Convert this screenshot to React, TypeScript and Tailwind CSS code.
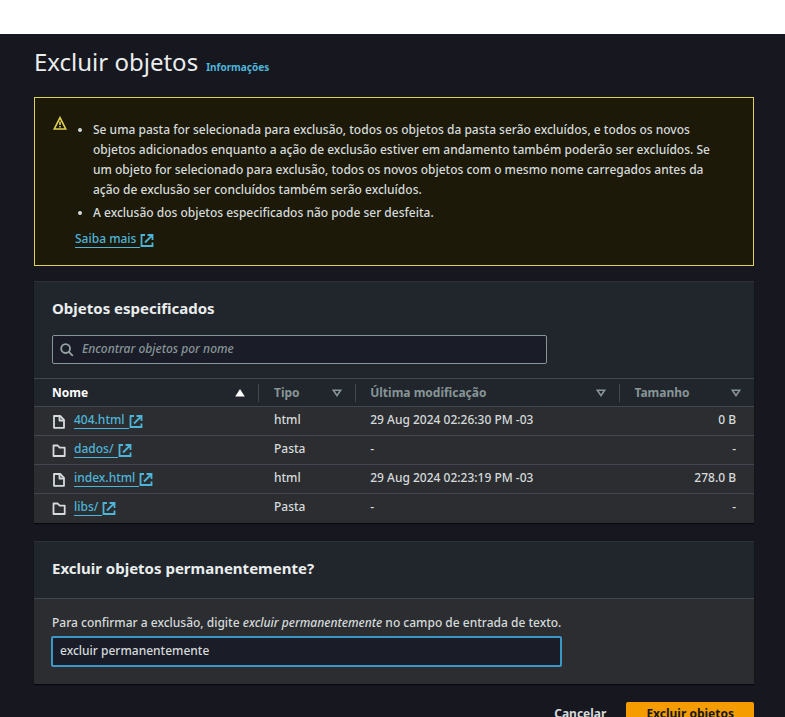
import { useState } from "react";

type Kind = "file" | "folder";

interface S3Object {
  name: string;
  kind: Kind;
  type: string;
  modified: string;
  size: string;
}

const objects: S3Object[] = [
  { name: "404.html", kind: "file", type: "html", modified: "29 Aug 2024 02:26:30 PM -03", size: "0 B" },
  { name: "dados/", kind: "folder", type: "Pasta", modified: "-", size: "-" },
  { name: "index.html", kind: "file", type: "html", modified: "29 Aug 2024 02:23:19 PM -03", size: "278.0 B" },
  { name: "libs/", kind: "folder", type: "Pasta", modified: "-", size: "-" },
];

function ExternalIcon() {
  return (
    <svg width="14" height="14" viewBox="0 0 14 14" fill="none" stroke="currentColor" strokeWidth="1.8" className="shrink-0" aria-hidden="true">
      <path d="M5 1H1.5v11h11V8.5" />
      <path d="M7.5 1h5v5M12.5 1L5 8.5" />
    </svg>
  );
}

function FileIcon() {
  return (
    <svg width="14" height="14" viewBox="0 0 14 14" fill="none" stroke="currentColor" strokeWidth="1.8" strokeLinejoin="round" className="shrink-0" aria-hidden="true">
      <path d="M2 1h6.2L12 4.8V12.8H2z" />
      <path d="M7.5 1v4.5H12" />
    </svg>
  );
}

function FolderIcon() {
  return (
    <svg width="14" height="14" viewBox="0 0 14 14" fill="none" stroke="currentColor" strokeWidth="1.8" strokeLinejoin="round" className="shrink-0" aria-hidden="true">
      <path d="M1.5 1.5h4.2l2 2.2h5V12H1.5z" />
    </svg>
  );
}

function WarningIcon() {
  return (
    <svg width="14" height="14" viewBox="0 0 14 14" fill="none" stroke="currentColor" strokeWidth="1.6" className="shrink-0" aria-hidden="true">
      <path d="M7 1.6L12.7 13H1.3z" />
      <path d="M7 5.5v3.6M7 10v1.6" />
    </svg>
  );
}

function SearchIcon() {
  return (
    <svg width="14" height="14" viewBox="0 0 14 14" fill="none" stroke="currentColor" strokeWidth="1.8" className="shrink-0" aria-hidden="true">
      <circle cx="5.6" cy="5.6" r="4.4" />
      <path d="M8.8 8.8l4 4" />
    </svg>
  );
}

function SortIcon({ active }: { active?: boolean }) {
  return (
    <svg width="10" height="8" viewBox="0 0 10 8" className="shrink-0" aria-hidden="true">
      {active ? (
        <path d="M5 0L9.8 7.6H0.2z" fill="currentColor" />
      ) : (
        <path d="M1.4 1.3h7.2L5 6.6z" fill="none" stroke="currentColor" strokeWidth="1.6" />
      )}
    </svg>
  );
}

function ExternalLink({ children }: { children: string }) {
  return (
    <a href="#" className="inline-flex items-end text-[#4db5d8]">
      <span className="border-b border-[#4db5d8] pr-1 leading-4">{children}</span>
      <ExternalIcon />
    </a>
  );
}

const columns = [
  { label: "Nome", width: "w-[31.25%]", pad: "pl-[18px]" },
  { label: "Tipo", width: "w-[13.5%]", pad: "pl-[15px]" },
  { label: "Última modificação", width: "w-[36.7%]", pad: "pl-[14px]" },
  { label: "Tamanho", width: "w-[18.55%]", pad: "pl-[14px]" },
];

export default function App() {
  const [confirmation, setConfirmation] = useState("excluir permanentemente");
  const [query, setQuery] = useState("");

  return (
    <div className="flex h-screen flex-col overflow-hidden bg-white pt-[34px] font-['Noto_Sans',sans-serif] text-[12px] leading-5 font-medium text-[#d5dbdb]">
      <main className="flex-1 overflow-hidden bg-[#17171f] pr-[31px] pl-[34px]">
        <header className="flex items-baseline gap-2 pt-3">
          <h1 className="text-[24px] leading-8 font-normal text-[#eaeded]">Excluir objetos</h1>
          <a href="#" className="text-[10px] font-bold text-[#4db5d8]">Informações</a>
        </header>

        <section className="mt-[19px] flex gap-2 border border-[#dfd152] bg-[#1d1908] px-[18px] pt-[18px] pb-[17px]">
          <span className="text-[#dfd152]">
            <WarningIcon />
          </span>
          <div className="min-w-0 flex-1 pr-5">
            <ul className="flex list-disc flex-col gap-[3px] pt-1 pl-[18px]">
              <li>
                Se uma pasta for selecionada para exclusão, todos os objetos da pasta serão excluídos, e todos os novos
                objetos adicionados enquanto a ação de exclusão estiver em andamento também poderão ser excluídos. Se
                um objeto for selecionado para exclusão, todos os novos objetos com o mesmo nome carregados antes da
                ação de exclusão ser concluídos também serão excluídos.
              </li>
              <li>A exclusão dos objetos especificados não pode ser desfeita.</li>
            </ul>
            <div className="mt-2 flex">
              <ExternalLink>Saiba mais</ExternalLink>
            </div>
          </div>
        </section>

        <section className="mt-[15px] border-t border-[#2e3035] bg-[#2c2d31] shadow-[0_1px_1px_#08080c]">
          <div className="bg-[#21252c] px-[18px] pt-[15px] pb-[14px]">
            <h2 className="text-[15px] leading-[22px] font-bold text-[#eaeded]">Objetos especificados</h2>
            <div className="mt-4 flex h-[29px] w-[495px] max-w-full items-center gap-2 rounded-xs border border-[#879596] bg-[#1a1c28] px-[7px] text-[#95a5a6]">
              <SearchIcon />
              <input
                type="search"
                aria-label="Encontrar objetos por nome"
                placeholder="Encontrar objetos por nome"
                value={query}
                onChange={(e) => setQuery(e.target.value)}
                className="min-w-0 flex-1 bg-transparent pb-0.5 outline-none placeholder:text-[#879596] placeholder:italic"
              />
            </div>
          </div>
          <table className="w-full table-fixed border-collapse">
            <thead>
              <tr className="h-7 border-y border-[#414750] bg-[#21252c] text-left">
                {columns.map((c, i) => (
                  <th key={c.label} className={`${c.width} p-0 font-bold ${i === 0 ? "text-white" : "text-[#879596]"}`}>
                    <div className={`flex h-[18px] items-center justify-between pr-[13px] ${c.pad} ${i < 3 ? "border-r border-[#414750]" : ""}`}>
                      <span>{c.label}</span>
                      <SortIcon active={i === 0} />
                    </div>
                  </th>
                ))}
              </tr>
            </thead>
            <tbody>
              {objects.map((o) => (
                <tr key={o.name} className="h-[29px] border-b border-[#414750] last:border-b-0">
                  <td className="p-0 pb-0.5 pl-[18px]">
                    <div className="flex items-end gap-2">
                      {o.kind === "file" ? <FileIcon /> : <FolderIcon />}
                      <ExternalLink>{o.name}</ExternalLink>
                    </div>
                  </td>
                  <td className="p-0 pb-0.5 pl-[15px]">{o.type}</td>
                  <td className="p-0 pb-0.5 pl-[14px]">{o.modified}</td>
                  <td className="p-0 pr-[18px] pb-0.5 text-right">{o.size}</td>
                </tr>
              ))}
            </tbody>
          </table>
        </section>

        <section className="mt-[18px] border-t border-[#2e3035] bg-[#2c2d31] shadow-[0_1px_1px_#08080c]">
          <div className="border-b border-[#414750] bg-[#21252c] px-[18px] pt-[15px] pb-[19px]">
            <h2 className="text-[15px] leading-[22px] font-bold text-[#eaeded]">Excluir objetos permanentemente?</h2>
          </div>
          <div className="px-[17px] pt-[14px] pb-[17px]">
            <label htmlFor="confirm" className="block pl-px">
              Para confirmar a exclusão, digite <i>excluir permanentemente</i> no campo de entrada de texto.
            </label>
            <input
              id="confirm"
              type="text"
              value={confirmation}
              onChange={(e) => setConfirmation(e.target.value)}
              className="mt-[3px] block h-[31px] w-[511px] max-w-full rounded-xs border-2 border-[#3a97c6] bg-[#1a1c28] px-[7px] pb-0.5 outline-none"
            />
          </div>
        </section>

        <footer className="mt-[18px] flex justify-end">
          <button type="button" className="h-[29px] px-5 pb-1 text-[12px] font-bold text-[#d5dbdb]">Cancelar</button>
          <button type="button" className="h-[29px] rounded-xs bg-[#f59d00] px-5 pb-1 text-[12px] font-bold text-[#17171f]">Excluir objetos</button>
        </footer>
      </main>
    </div>
  );
}
